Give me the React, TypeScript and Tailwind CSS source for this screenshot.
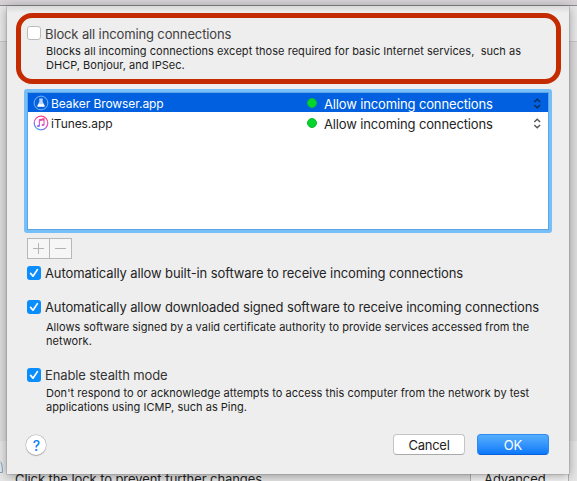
import type { ReactNode } from "react";

function Check() {
  return (
    <span className="flex h-[14px] w-[14px] shrink-0 items-center justify-center rounded-[3px] bg-[#0a8dfd]">
      <svg width="14" height="14" viewBox="0 0 14 14" fill="none">
        <path d="M3.6 7.4 L6 10.2 L10.4 3.6" stroke="white" strokeWidth="1.7" strokeLinecap="round" strokeLinejoin="round" />
      </svg>
    </span>
  );
}

function Option({ label, className, children }: { label: string; className: string; children?: ReactNode }) {
  return (
    <div>
      <label className="flex h-[14px] items-center">
        <Check />
        <span className={`ml-1 whitespace-nowrap text-[13px] leading-[14px] ${className}`}>{label}</span>
      </label>
      {children}
    </div>
  );
}

function Line({ children, className }: { children: ReactNode; className: string }) {
  return <div className={`whitespace-pre text-[11px] leading-[14px] text-[#1c1c1c] ${className}`}>{children}</div>;
}

function BeakerIcon() {
  return (
    <svg width="16" height="16" viewBox="0 0 16 16" fill="none">
      <circle cx="8" cy="8" r="6.9" fill="#0763dc" stroke="#8cbcf4" strokeWidth="0.9" />
      <path d="M6.3 3.4h3.4v3.4l2 3.8q.5 1.5-.8 1.5H5.1q-1.3 0-.8-1.5l2-3.8z" fill="#b9d8fb" />
      <path d="M5.4 9.2h5.2l.7 2H4.7z" fill="#fff" />
    </svg>
  );
}

function TunesIcon() {
  return (
    <svg width="16" height="16" viewBox="0 0 16 16" fill="none">
      <defs>
        <linearGradient id="tunes" x1="12" y1="1" x2="5" y2="15" gradientUnits="userSpaceOnUse">
          <stop offset="0" stopColor="#ff3b72" />
          <stop offset="0.5" stopColor="#e34fc4" />
          <stop offset="0.78" stopColor="#7e6cf0" />
          <stop offset="1" stopColor="#35b8f3" />
        </linearGradient>
      </defs>
      <circle cx="8" cy="8" r="6.8" fill="#fff" stroke="url(#tunes)" strokeWidth="1.2" />
      <path d="M6.4 11V4.7l4.6-1v6.1M6.4 5.6l4.6-1" stroke="url(#tunes)" strokeWidth="1.1" />
      <ellipse cx="5.4" cy="11" rx="1.4" ry="1.1" fill="#8b62ec" />
      <ellipse cx="10" cy="10" rx="1.4" ry="1.1" fill="#d94fcc" />
    </svg>
  );
}

function AppRow({ icon, name, rowClass, arrow }: { icon: ReactNode; name: string; rowClass: string; arrow: string }) {
  return (
    <div className={`flex items-start ${rowClass}`}>
      <span className="ml-[5px] mt-[2px]">{icon}</span>
      <span className="ml-[2px] mt-[3px] w-[256px] whitespace-nowrap text-[12px] leading-4 tracking-[-0.07px]">{name}</span>
      <span className="mt-[5px] h-[10px] w-[10px] rounded-full border border-[#10b832] bg-[#03d52d]" />
      <span className="ml-[7px] mt-[3px] w-[208px] whitespace-nowrap text-[13px] leading-4 tracking-[-0.14px]">Allow incoming connections</span>
      <svg className="mt-[5px]" width="10" height="11" viewBox="0 0 10 11" fill="none">
        <path d="M2.3 4L5.2 1.2L8.1 4M2.3 7L5.2 9.8L8.1 7" stroke={arrow} strokeWidth="1.4" />
      </svg>
    </div>
  );
}

export default function App() {
  return (
    <div className="relative h-[481px] w-[577px] overflow-hidden bg-[#dcdcdc] font-['Inter','Liberation_Sans',sans-serif] text-[#242424]">
      <div className="flex h-full flex-col">
        <div className="h-[5px] bg-[#d5d1d5]" />
        <div className="h-px bg-[#8e8c8e]" />
        <div className="h-[35px] bg-[#e8e8e8]" />
        <div className="h-px bg-[#c8c8c8]" />
        <div className="h-[399px] bg-[#dcdcdc]" />
        <div className="flex flex-1 items-end justify-between bg-[#e6e6e6] pl-[15px]">
          <span className="h-[10px] whitespace-nowrap text-[13px] leading-4 tracking-[-0.08px]">Click the lock to prevent further changes.</span>
          <span className="mr-[8px] h-[14px] w-[99px] border-x border-[#b5b5b5] bg-[#f6f6f6] pl-[13px] pt-1 text-[13px] leading-4 tracking-[-0.08px]">Advanced...</span>
        </div>
      </div>
      <svg className="absolute left-0 top-[460px]" width="4" height="14" viewBox="0 0 4 14" fill="none">
        <path d="M0 1.5Q2.5 3 2.5 12.5H0" fill="#dce8f2" stroke="#8ba3b5" />
      </svg>

      <main className="absolute left-[7px] top-[6px] flex h-[468px] w-[562px] flex-col bg-[#eeeeee] shadow-[0_0_1px_#555,0_2px_10px_rgba(0,0,0,0.35)]">
        <div className="-mb-[7px] h-[7px] shrink-0 bg-linear-to-b from-[#d9d9d9] to-[#eeeeee]" />
        <section className="ml-[9px] mt-[7px] h-[71px] w-[545px] shrink-0 rounded-[16px] border-[5px] border-[#c42b00] pl-[6px] pt-[8px]">
          <label className="flex h-[14px] items-center">
            <span className="h-[14px] w-[14px] rounded-[3px] border border-[#bcbcbc] bg-white" />
            <span className="ml-1 whitespace-nowrap pt-px text-[13px] leading-[14px] tracking-[-0.13px] text-[#404040]">Block all incoming connections</span>
          </label>
          <div className="ml-[19px] mt-1">
            <Line className="tracking-[0.04px]">Blocks all incoming connections except those required for basic Internet services,  such as</Line>
            <Line className="tracking-[0.02px]">DHCP, Bonjour, and IPSec.</Line>
          </div>
        </section>

        <section className="ml-[17px] mt-[5px] h-[144px] w-[528px] shrink-0 rounded-[3px] bg-[#77bff8] p-[3px]">
          <div className="h-full border border-[#5aa5e4] bg-white">
            <AppRow icon={<BeakerIcon />} name="Beaker Browser.app" rowClass="h-[19px] bg-[#0060df] text-white" arrow="#0c2b5c" />
            <AppRow icon={<TunesIcon />} name="iTunes.app" rowClass="mt-px h-[19px]" arrow="#555555" />
          </div>
        </section>

        <div className="ml-[20px] mt-[5px] flex h-[21px] w-[45px] shrink-0 border border-[#b8b8b8] bg-[#f6f6f6]">
          <span className="flex w-[22px] items-center justify-center border-r border-[#b8b8b8]">
            <svg width="11" height="11" viewBox="0 0 11 11"><path d="M0 5.5H11M5.5 0V11" stroke="#b3b3b3" /></svg>
          </span>
          <span className="flex flex-1 items-center justify-center">
            <svg width="11" height="11" viewBox="0 0 11 11"><path d="M0 5.5H11" stroke="#b3b3b3" /></svg>
          </span>
        </div>

        <div className="ml-[20px] mt-[7px] flex flex-col gap-5">
          <Option label="Automatically allow built-in software to receive incoming connections" className="tracking-[-0.11px]" />
          <Option label="Automatically allow downloaded signed software to receive incoming connections" className="tracking-[-0.12px]">
            <div className="ml-[19px] mt-[6px]">
              <Line className="tracking-[0.03px]">Allows software signed by a valid certificate authority to provide services accessed from the</Line>
              <Line className="tracking-[0.03px]">network.</Line>
            </div>
          </Option>
          <Option label="Enable stealth mode" className="tracking-[-0.12px] text-[#333333]">
            <div className="ml-[19px] mt-1">
              <Line className="tracking-[0.04px]">Don't respond to or acknowledge attempts to access this computer from the network by test</Line>
              <Line className="tracking-[0.02px]">applications using ICMP, such as Ping.</Line>
            </div>
          </Option>
        </div>

        <footer className="ml-[19px] mt-[20px] flex w-[523px] items-center">
          <button className="mr-auto flex h-5 w-5 items-center justify-center rounded-full bg-white pl-px pt-px text-[14px] font-medium text-[#0a80fb] shadow-[0_0_0_0.5px_#b0b0b0,0_1px_1px_#aaa]">?</button>
          <button className="mr-[12px] h-[21px] w-[72px] rounded-[4px] border border-[#c4c4c4] border-b-[#aaaaaa] bg-white text-[13px] leading-[18px] tracking-[-0.25px]">Cancel</button>
          <button className="h-[21px] w-[72px] rounded-[4px] border border-[#2a8cf0] border-b-[#0a60d8] bg-linear-to-b from-[#55affc] to-[#0878fa] text-[13px] leading-[18px] text-white">OK</button>
        </footer>
      </main>
    </div>
  );
}
